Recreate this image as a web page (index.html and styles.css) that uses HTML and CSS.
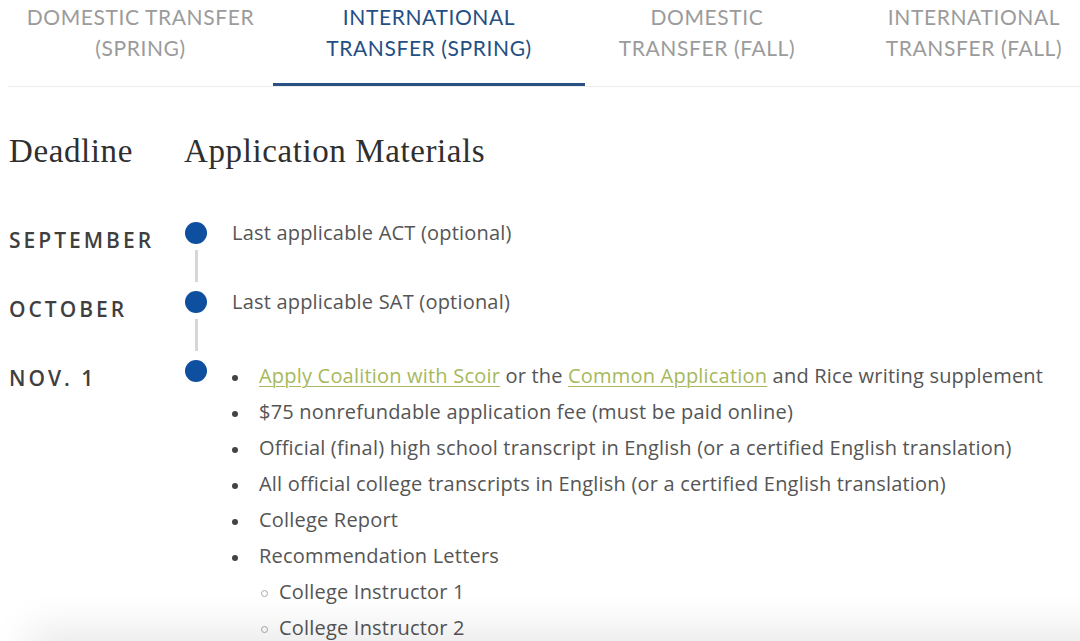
FILE: index.html
```html
<!DOCTYPE html>
<html lang="en">
<head>
<meta charset="utf-8">
<title>Transfer Deadlines</title>
<link rel="stylesheet" href="styles.css">
</head>
<body>
<nav class="tabs">
  <a class="tab tab-1">DOMESTIC TRANSFER<br>(SPRING)</a>
  <a class="tab tab-2 active">INTERNATIONAL<br>TRANSFER (SPRING)</a>
  <a class="tab tab-3">DOMESTIC<br>TRANSFER (FALL)</a>
  <a class="tab tab-4">INTERNATIONAL<br>TRANSFER (FALL)</a>
</nav>

<main class="schedule">
  <div class="head">
    <h2 class="h-deadline">Deadline</h2>
    <h2 class="h-materials">Application Materials</h2>
  </div>

  <div class="row">
    <div class="label">SEPTEMBER</div>
    <div class="track"><span class="dot"></span><span class="line"></span></div>
    <div class="content"><p>Last applicable ACT (optional)</p></div>
  </div>

  <div class="row">
    <div class="label">OCTOBER</div>
    <div class="track"><span class="dot"></span><span class="line"></span></div>
    <div class="content"><p>Last applicable SAT (optional)</p></div>
  </div>

  <div class="row">
    <div class="label">NOV. 1</div>
    <div class="track"><span class="dot"></span></div>
    <div class="content">
      <ul class="items">
        <li><a href="#">Apply Coalition with Scoir</a> or the <a href="#">Common Application</a> and Rice writing supplement</li>
        <li>$75 nonrefundable application fee (must be paid online)</li>
        <li>Official (final) high school transcript in English (or a certified English translation)</li>
        <li>All official college transcripts in English (or a certified English translation)</li>
        <li>College Report</li>
        <li>Recommendation Letters
          <ul class="sub">
            <li>College Instructor 1</li>
            <li>College Instructor 2</li>
          </ul>
        </li>
      </ul>
    </div>
  </div>
</main>

<div class="bottom-shadow"></div>
</body>
</html>
```

FILE: styles.css
```css
html, body {
  margin: 0;
  padding: 0;
  background: #ffffff;
  overflow: hidden;
}

body {
  width: 1080px;
  height: 641px;
  font-family: "Open Sans", "Liberation Sans", sans-serif;
  color: #555555;
}

.tabs {
  display: flex;
  margin-left: 8px;
  border-bottom: 1px solid #ececec;
  width: 1200px;
}

.tab {
  flex: none;
  box-sizing: border-box;
  height: 86px;
  padding-top: 1px;
  text-align: center;
  font-family: "Lato", "Open Sans", sans-serif;
  font-size: 21px;
  line-height: 31px;
  letter-spacing: 0.6px;
  color: #9b9b9b;
  text-decoration: none;
  border-bottom: 3px solid transparent;
}

.tab-1 { width: 265px; }
.tab-2 { width: 312px; }
.tab-3 { width: 244px; }
.tab-4 { width: 290px; }

.tab.active {
  color: #244f82;
  border-bottom-color: #2a5182;
}

.schedule {
  padding-left: 9px;
}

.head {
  display: flex;
  align-items: baseline;
  padding-top: 44px;
  height: 84px;
}

.head h2 {
  margin: 0;
  font-family: "Liberation Serif", serif;
  font-weight: normal;
  font-size: 33px;
  letter-spacing: 0.6px;
  color: #2f2f2f;
  line-height: 40px;
}

.h-deadline { width: 175px; }

.row {
  display: grid;
  grid-template-columns: 175px 24px 1fr;
}

.label {
  padding-top: 7px;
  font-weight: 600;
  font-size: 21px;
  line-height: 36px;
  letter-spacing: 3px;
  color: #3f3f3f;
}

.track {
  display: flex;
  flex-direction: column;
  align-items: center;
  padding-top: 7px;
}

.dot {
  width: 22px;
  height: 22px;
  border-radius: 50%;
  background: #0f4fa0;
  flex: none;
}

.line {
  flex: 1;
  width: 3px;
  background: #d6d6d6;
  margin: 6px 0 2px;
}

.content {
  padding-left: 24px;
  padding-bottom: 33px;
  font-size: 20px;
  letter-spacing: 0.2px;
}

.content p {
  margin: 0;
  line-height: 36px;
}

.items {
  margin: 5px 0 0;
  padding-left: 27px;
  line-height: 36px;
  list-style: none;
}

.items > li::before {
  content: "";
  display: inline-block;
  box-sizing: border-box;
  width: 6px;
  height: 6px;
  border-radius: 50%;
  background: #444444;
  margin: 0 21px 0 -27px;
  vertical-align: middle;
}

.sub {
  margin: 0;
  padding-left: 20px;
  list-style: none;
}

.sub > li::before {
  content: "";
  display: inline-block;
  box-sizing: border-box;
  width: 7px;
  height: 7px;
  border-radius: 50%;
  border: 1px solid #a8a8a8;
  margin: 0 11px 0 -18px;
  vertical-align: middle;
}

.items a {
  color: #a6b95c;
  text-decoration: underline;
  text-underline-offset: 3px;
  text-decoration-thickness: 1px;
}

.bottom-shadow {
  position: fixed;
  left: 40px;
  right: -40px;
  bottom: -30px;
  height: 30px;
  box-shadow: 0 0 40px 12px rgba(0, 0, 0, 0.09);
}
```
